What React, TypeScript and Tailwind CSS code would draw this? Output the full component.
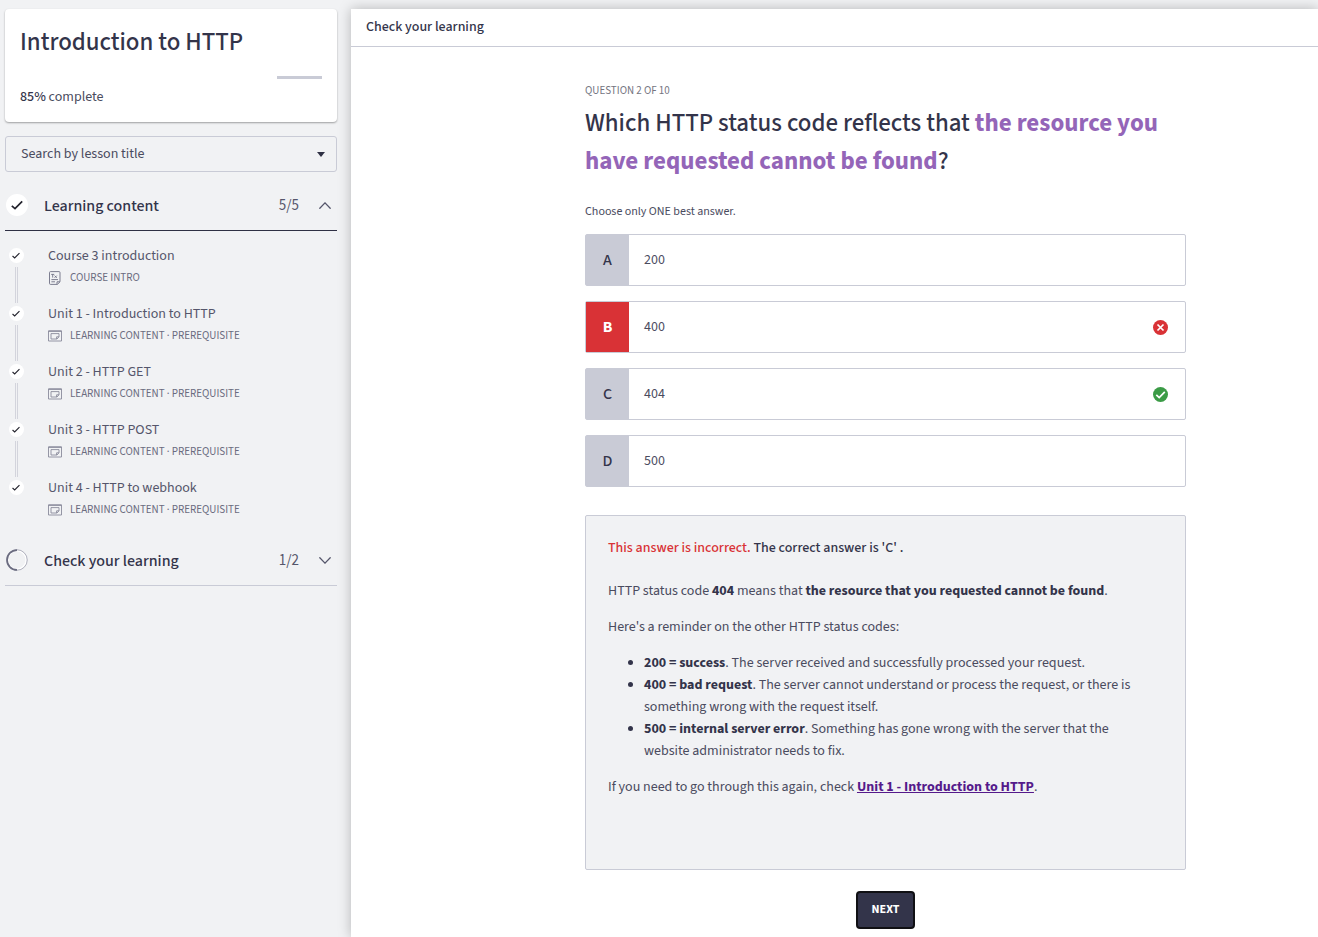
import { useState } from "react";
import type { ReactNode } from "react";

type Lesson = { title: string; meta: string; kind: "text" | "deck" };

const lessons: Lesson[] = [
  { title: "Course 3 introduction", meta: "COURSE INTRO", kind: "text" },
  { title: "Unit 1 - Introduction to HTTP", meta: "LEARNING CONTENT · PREREQUISITE", kind: "deck" },
  { title: "Unit 2 - HTTP GET", meta: "LEARNING CONTENT · PREREQUISITE", kind: "deck" },
  { title: "Unit 3 - HTTP POST", meta: "LEARNING CONTENT · PREREQUISITE", kind: "deck" },
  { title: "Unit 4 - HTTP to webhook", meta: "LEARNING CONTENT · PREREQUISITE", kind: "deck" },
];

type Option = { letter: string; text: string; state?: "wrong" | "right" };

const options: Option[] = [
  { letter: "A", text: "200" },
  { letter: "B", text: "400", state: "wrong" },
  { letter: "C", text: "404", state: "right" },
  { letter: "D", text: "500" },
];

function Check({ className }: { className: string }) {
  return (
    <svg viewBox="0 0 12 10" className={className} fill="none" stroke="#22222c" strokeWidth="1.7" aria-hidden="true">
      <path d="M0.8 5.8 L4 8.6 L11.2 1.4" />
    </svg>
  );
}

function Chevron({ up = false }: { up?: boolean }) {
  return (
    <svg viewBox="0 0 12 7" className="h-[7px] w-3" fill="none" stroke="#55566b" strokeWidth="1.3" strokeLinecap="round" aria-hidden="true">
      <path d={up ? "M0.8 6.2 L6 0.9 L11.2 6.2" : "M0.8 0.8 L6 6.1 L11.2 0.8"} />
    </svg>
  );
}

function TextIcon() {
  return (
    <svg viewBox="0 0 14 14" className="h-3.5 w-3.5" fill="none" stroke="#6f7085" strokeWidth="0.9" aria-hidden="true">
      <path d="M2.5 0.6 H11 Q12 0.6 12 1.6 V10.8 L9.4 13.4 H2.5 Q1.5 13.4 1.5 12.4 V1.6 Q1.5 0.6 2.5 0.6 Z" />
      <path d="M9 13.2 V10.8 H11.8" />
      <path d="M3.2 3.4 H6.2 M4.7 3.4 V6.6 M6.6 4.6 L8.8 6.8 M8.8 4.6 L6.6 6.8" />
      <path d="M3.4 8.6 H10 M3.4 10.8 H7" />
    </svg>
  );
}

function DeckIcon() {
  return (
    <svg viewBox="0 0 14 12" className="h-3 w-3.5" fill="none" stroke="#8a8b9c" strokeWidth="0.9" aria-hidden="true">
      <path d="M0.5 0.9 H13.5 V11 H0.5 Z" />
      <path d="M0.5 1.2 H13.5" strokeWidth="1.2" />
      <path d="M3 3.6 H11 V6.8 L9 9 H3 Z" />
      <path d="M8.6 9 V6.8 H11" />
    </svg>
  );
}

function SectionHeader({ icon, title, count, up }: { icon: ReactNode; title: string; count: string; up?: boolean }) {
  return (
    <button
      type="button"
      aria-expanded={!!up}
      className={
        "flex h-[51px] w-full items-center border-b pr-1.5 pl-px text-left leading-[24px] " +
        (up ? "border-[#2f3044]" : "border-[#c9cbd6]")
      }
    >
      {icon}
      <span className="ml-4 flex-1 pt-px text-[16px] font-medium text-[#33344a]">{title}</span>
      <span className="mr-5 pt-px text-[15px] text-[#55566b]">{count}</span>
      <Chevron up={up} />
    </button>
  );
}

function Sidebar() {
  return (
    <aside className="w-[351px] shrink-0 pt-[9px] pr-[14px] pl-[5px]">
      <section className="h-[113px] rounded bg-white px-[15px] pt-4 shadow-[0_1px_2px_rgba(0,0,0,0.35)]">
        <h1 className="text-[25px] leading-[34px] font-medium text-[#33344a]">Introduction to HTTP</h1>
        <div className="mt-[17px] flex justify-end">
          <div className="h-[3px] w-[45px] bg-[#c9cbd6]" />
        </div>
        <p className="mt-[7px] text-[14px] leading-[22px] text-[#4a4b5e]">
          <span className="font-medium text-[#33344a]">85%</span> complete
        </p>
      </section>

      <label className="mt-3.5 flex h-9 items-center rounded-[3px] border border-[#c9cbd6] pr-[11px] pl-[15px]">
        <select aria-label="Search by lesson title" className="min-w-0 flex-1 appearance-none bg-transparent text-[14px] leading-[22px] text-[#4a4b5e] outline-none">
          <option>Search by lesson title</option>
        </select>
        <svg viewBox="0 0 8 5" className="h-[5px] w-2" fill="#2f3044" aria-hidden="true">
          <path d="M0 0 H8 L4 5 Z" />
        </svg>
      </label>

      <nav className="mt-2">
        <SectionHeader
          up
          icon={
            <span className="flex size-[22px] items-center justify-center rounded-full bg-white">
              <Check className="h-2.5 w-3" />
            </span>
          }
          title="Learning content"
          count="5/5"
        />
        <ol className="mt-3.5">
          {lessons.map((l, i) => (
            <li key={l.title} className="flex h-[58px]">
              <div className="ml-[3px] flex w-4 flex-col items-center pt-[3px]">
                <span className="flex size-[15px] items-center justify-center rounded-full bg-white">
                  <Check className="h-[7px] w-2" />
                </span>
                {i < lessons.length - 1 && <span className="mt-1 h-9 w-[3px] border-x border-[#d3d4dc]" />}
              </div>
              <a href="#lesson" className="ml-6 block">
                <span className="block text-[14px] leading-[22px] text-[#55566b]">{l.title}</span>
                <span className="flex h-[22px] items-center gap-2 text-[11px] leading-[22px] text-[#6b6c80]">
                  {l.kind === "text" ? <TextIcon /> : <DeckIcon />}
                  {l.meta}
                </span>
              </a>
            </li>
          ))}
        </ol>
        <SectionHeader
          icon={
            <svg viewBox="0 0 23 23" className="size-[22px]" fill="none" aria-hidden="true">
              <circle cx="11.5" cy="11.5" r="9.6" stroke="#ffffff" strokeWidth="1.6" />
              <circle cx="11.5" cy="11.5" r="10.7" stroke="#9a9bab" strokeWidth="0.8" />
              <path d="M11.5 1.1 A10.4 10.4 0 0 0 11.5 21.9" stroke="#6b6c80" strokeWidth="1.8" />
            </svg>
          }
          title="Check your learning"
          count="1/2"
        />
      </nav>
    </aside>
  );
}

function StateIcon({ state }: { state: "wrong" | "right" }) {
  return (
    <svg viewBox="0 0 15 15" className="size-[15px]" fill="none" stroke="#ffffff" strokeWidth="1.7" role="img" aria-label={state}>
      <circle cx="7.5" cy="7.5" r="7.5" fill={state === "wrong" ? "#d93236" : "#3b9b46"} stroke="none" />
      <path d={state === "wrong" ? "M4.5 4.5 L10.5 10.5 M10.5 4.5 L4.5 10.5" : "M3.3 7.8 L6.2 10.6 L11.8 4.8"} />
    </svg>
  );
}

export default function App() {
  const [answer, setAnswer] = useState("B");
  return (
    <div
      className="flex min-h-screen bg-[#f1f2f4] text-[#4a4b5e]"
      style={{ fontFamily: '"Source Sans 3", "Source Sans Pro", "Noto Sans CJK SC", sans-serif' }}
    >
      <Sidebar />
      <main className="mt-[9px] min-w-0 flex-1 bg-white shadow-[0_0_12px_rgba(0,0,0,0.25)]">
        <header className="flex h-[38px] items-center border-b border-[#c9cbd6] px-[15px] pb-0.5 text-[14px] leading-[22px] font-medium text-[#33344a]">
          Check your learning
        </header>
        <div className="pt-9 pr-[132px] pb-2 pl-[234px]">
          <p className="text-[11px] leading-[16px] text-[#74757f]">QUESTION 2 OF 10</p>
          <h2 className="mt-[5px] text-[25px] leading-[38px] font-medium text-[#33344a]">
            Which HTTP status code reflects that{" "}
            <strong className="font-bold text-[#9465b8]">the resource you have requested cannot be found</strong>?
          </h2>
          <p className="mt-[22px] text-[12px] leading-[20px]">Choose only ONE best answer.</p>

          <div role="radiogroup" aria-label="Answers" className="mt-3 flex flex-col gap-[15px]">
            {options.map((o) => (
              <label key={o.letter} className="flex h-[52px] items-center rounded-xs border border-[#c9cbd6] pr-[17px]">
                <input
                  type="radio"
                  name="answer"
                  value={o.letter}
                  checked={answer === o.letter}
                  onChange={() => setAnswer(o.letter)}
                  className="sr-only"
                />
                <span
                  className={
                    "flex w-[43px] items-center justify-center self-stretch text-[16px] " +
                    (o.state === "wrong" ? "bg-[#d93236] font-bold text-white" : "bg-[#c9cbd6] font-medium text-[#33344a]")
                  }
                >
                  {o.letter}
                </span>
                <span className="ml-[15px] flex-1 text-[14px] leading-[22px]">{o.text}</span>
                {o.state && <StateIcon state={o.state} />}
              </label>
            ))}
          </div>

          <section className="mt-7 rounded-xs border border-[#c9cbd6] bg-[#f1f2f4] px-[22px] pt-[21px] pb-[71px] text-[14px] leading-[22px] [&_strong]:font-bold [&_strong]:text-[#33344a]">
            <p className="font-medium text-[#33344a]">
              <span className="text-[#d93236]">This answer is incorrect.</span> The correct answer is 'C' .
            </p>
            <p className="mt-[21px]">
              HTTP status code <strong>404</strong> means that{" "}
              <strong>the resource that you requested cannot be found</strong>.
            </p>
            <p className="mt-3.5">Here's a reminder on the other HTTP status codes:</p>
            <ul className="mt-3.5 list-disc pr-4 pl-9 marker:text-[#33344a]">
              <li>
                <strong>200 = success</strong>. The server received and successfully processed your request.
              </li>
              <li>
                <strong>400 = bad request</strong>. The server cannot understand or process the request, or there is
                something wrong with the request itself.
              </li>
              <li>
                <strong>500 = internal server error</strong>. Something has gone wrong with the server that the website
                administrator needs to fix.
              </li>
            </ul>
            <p className="mt-3.5">
              If you need to go through this again, check{" "}
              <a href="#unit-1" className="font-bold text-[#551a8b] underline">
                Unit 1 - Introduction to HTTP
              </a>
              .
            </p>
          </section>

          <div className="mt-[21px] flex justify-center">
            <button type="button" className="h-[38px] rounded-[4px] border-2 border-[#101014] bg-[#33344a] px-3.5 text-[12px] font-bold text-white">
              NEXT
            </button>
          </div>
        </div>
      </main>
    </div>
  );
}
